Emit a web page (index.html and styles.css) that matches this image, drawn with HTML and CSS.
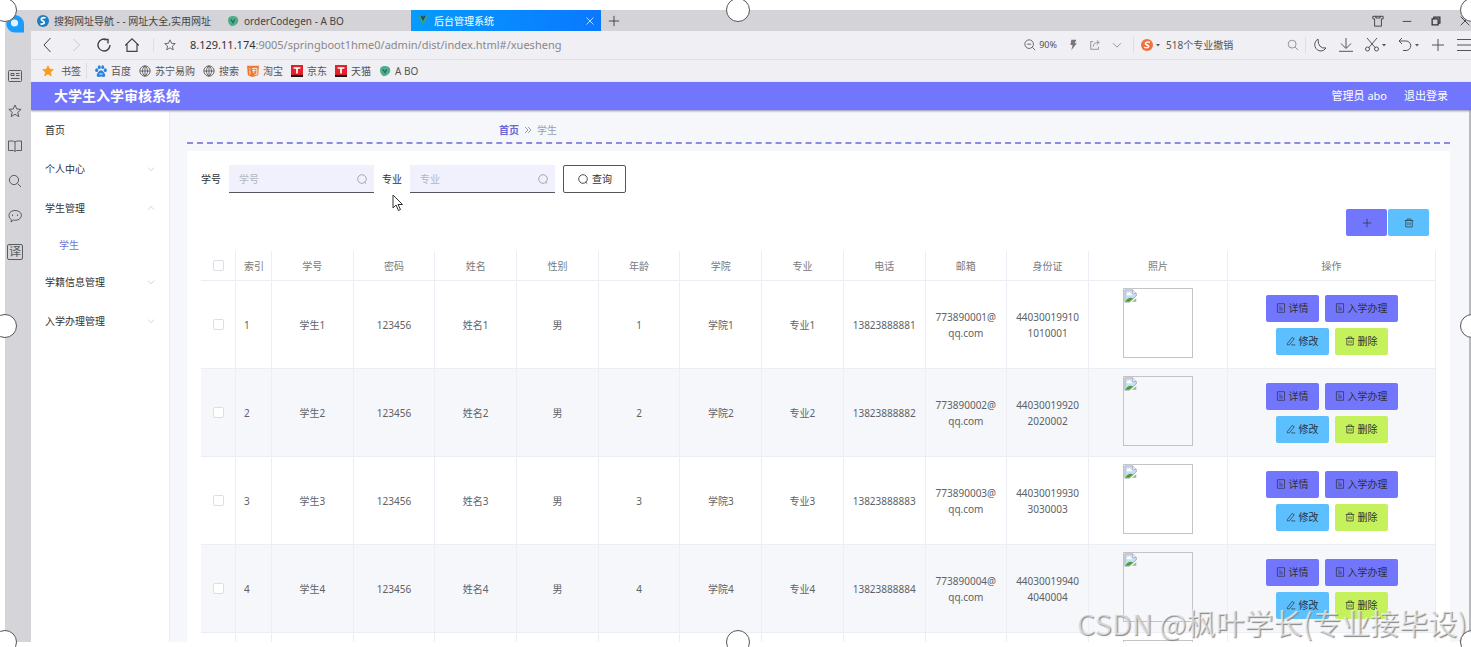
FILE: index.html
```html
<!doctype html>
<html lang="zh-CN">
<head>
<meta charset="UTF-8">
<title>后台管理系统</title>
<link rel="stylesheet" href="styles.css">
</head>
<body>
<svg class="sprite" aria-hidden="true">
	<symbol id="search" viewBox="0 0 14 14"><circle cx="6" cy="6" r="4.6"/><path d="M9.5 9.5L13 13"/></symbol>
	<symbol id="zoom-out" viewBox="0 0 14 14"><circle cx="6" cy="6" r="5"/><path d="M9.7 9.7L13 13M3.7 6h4.6"/></symbol>
	<symbol id="lens" viewBox="0 0 14 14"><circle cx="7" cy="7" r="5"/><path d="M10 10.500l2 2"/></symbol>
	<symbol id="star" viewBox="0 0 14 14"><path d="M7 1l1.8 4 4.3.4-3.3 2.9 1 4.3L7 10.3l-3.8 2.3 1-4.3L.9 5.4 5.2 5z"/></symbol>
	<symbol id="down" viewBox="0 0 14 14"><path d="M2.5 5L7 9.5 11.5 5"/></symbol>
	<symbol id="up" viewBox="0 0 14 14"><path d="M2.5 9.5L7 5l4.5 4.5"/></symbol>
	<symbol id="plus" viewBox="0 0 14 14"><path d="M7 1v12M1 7h12"/></symbol>
	<symbol id="tick" viewBox="0 0 4 14"><path d="M0 6h4L2 8.5z" fill="#555" stroke="none"/></symbol>
	<symbol id="globe" viewBox="0 0 14 14"><circle cx="7" cy="7" r="6"/><path d="M1 7h12M7 1v12M7 1C3 4 3 10 7 13M7 1c4 3 4 9 0 12"/></symbol>
	<symbol id="leaf" viewBox="0 0 14 14"><path d="M2 3c4-3 10-2 11 2 1 5-4 8-8 8-3-2-5-6-3-10z" fill="#4cae8a" stroke="none"/><path d="M4.5 5L7 9l2-4" stroke="#2c6f60" stroke-width="1.6"/></symbol>
	<symbol id="red-t" viewBox="0 0 14 14"><path d="M0 0h14v14H0z" fill="#e3202c" stroke="none"/><path d="M0 11.5h14V14H0z" fill="#251014" stroke="none"/><path d="M3 3.5h8M7 3.5V10" stroke="#fff" stroke-width="2"/></symbol>
	<symbol id="doc" viewBox="0 0 14 14"><path d="M2 1h10v12H2zM4.5 4.5h2M4.5 7h5M4.5 9.5h5"/></symbol>
	<symbol id="edit" viewBox="0 0 14 14"><path d="M2 10.5L8.5 2l3 2L5 12l-3 .5zM7 12.5h6"/></symbol>
	<symbol id="trash" viewBox="0 0 14 14"><path d="M1 3.5h12M4.5 3.5V1.5h5v2M2.5 3.5v9h9v-9M5.5 6v4M8.5 6v4"/></symbol>
	<symbol id="broken" viewBox="0 0 16 16"><path d="M1 1h9l4 4v3L6 15H1z" fill="#cbdcf5" stroke="#a5a9b0"/><path d="M10 1v4h4" fill="#fff" stroke="#a5a9b0"/><path d="M3 6q0-2 2-2 2-1 3 1 1 0 1 2H3z" fill="#fff" stroke="none"/><path d="M1.5 14.5q3-6 9-4L6 14.5z" fill="#4b9f35" stroke="none"/><path d="M9 14.5l5-4v4z" fill="#9fb595" stroke="none"/></symbol>
</svg>

<div class="frame">
	<!-- browser side rail -->
	<div class="rail">
		<svg class="rail-logo" viewBox="0 0 18 18"><path d="M9 0a9 9 0 0 1 9 9v8.500H9A8.700 8.700 0 0 1 9 0z" fill="#1a9dfb" stroke="none"/><circle cx="8.500" cy="8" r="3.600" fill="#e4f3ff" stroke="none"/></svg>
		<svg class="icon" viewBox="0 0 14 14"><rect x=".5" y="1.500" width="13" height="11" rx="1"/><path d="M3 4.500h3v2H3zM8 4.500h3.500M8 6.500h3.500M3 9.500h8.500"/></svg>
		<svg class="icon"><use href="#star"/></svg>
		<svg class="icon" viewBox="0 0 14 14"><path d="M7 3Q6 2 4.500 2H.500v9.500h5L7 12.500l1.500-1h5V2h-4Q8 2 7 3zM7 3v9"/></svg>
		<svg class="icon"><use href="#search"/></svg>
		<svg class="icon" viewBox="0 0 14 14"><path d="M3 13l.5-2.200C-1 8 .5 1.500 7 1.500s8.500 6 4 8.800C9 11.600 6.500 11.400 5.500 11z"/><path d="M4.500 5.500v1.500M9.500 5.500v1.500"/></svg>
		<span class="translate">译</span>
	</div>

	<div class="browser">
		<div class="tabs">
			<div class="tab"><svg class="icon-s" viewBox="0 0 14 14"><circle cx="7" cy="7" r="7" fill="#1c7cc4" stroke="none"/><path d="M10 3.500C6 2 3 5 6.500 6.800S9 11 4 10.500" stroke="#fff" stroke-width="2"/></svg><span class="tab-text">搜狗网址导航 - - 网址大全,实用网址</span></div>
			<div class="tab"><svg class="icon-s"><use href="#leaf"/></svg><span class="tab-text">orderCodegen - A BO</span></div>
			<div class="tab active"><svg class="icon-s" viewBox="0 0 14 14"><path d="M1 1h3l3 5 3-5h3L7 12z" fill="#36a37c" stroke="none"/><path d="M4 1h2l1 2 1-2h2L7 7z" fill="#24435d" stroke="none"/></svg><span class="tab-text">后台管理系统</span><svg class="icon-xs" viewBox="0 0 14 14"><path d="M2 2l10 10M12 2L2 12"/></svg></div>
			<svg class="icon-s new-tab"><use href="#plus"/></svg>
			<div class="window-tools">
				<svg class="icon-s" viewBox="0 0 14 14"><path d="M1 1.500h12v3h-2V13H3V4.500H1zM4.500 1.500v2h5v-2"/></svg>
				<svg class="icon-s" viewBox="0 0 14 14"><path d="M2 7.500h10"/></svg>
				<svg class="icon-s" viewBox="0 0 14 14"><path d="M2.500 4.500h7v7h-7zM4.500 4.500v-2h7v7h-2" stroke-width="1.500"/></svg>
				<svg class="icon-s" viewBox="0 0 14 14"><path d="M2 2l10 10M12 2L2 12"/></svg>
			</div>
		</div>

		<div class="toolbar">
			<div class="nav-tools">
				<svg class="icon" viewBox="0 0 14 14"><path d="M9.500 0L3 7l6.500 7"/></svg>
				<svg class="icon pale" viewBox="0 0 14 14"><path d="M4.500 1L10.500 7l-6 6"/></svg>
				<svg class="icon" viewBox="0 0 14 14"><path d="M10 1.800A6 6 0 1 0 13 7M7 1.500h4v4" stroke-width="1.400"/></svg>
				<svg class="icon" viewBox="0 0 14 14"><path d="M0 7.500L7 .8l7 6.700M2 6v7.300h10V6" stroke-width="1.200"/></svg>
			</div>
			<div class="address"><svg class="icon-s"><use href="#star"/></svg><span class="url"><b>8.129.11.174</b>:9005/springboot1hme0/admin/dist/index.html#/xuesheng</span></div>
			<div class="page-tools">
				<span class="zoom"><svg class="icon-s"><use href="#zoom-out"/></svg>90%</span>
				<svg class="icon-s" viewBox="0 0 14 14"><path d="M5 1h6L9 5h2.500L5 13l1.500-6H4z" fill="#777" stroke="none"/></svg>
				<svg class="icon-s light" viewBox="0 0 14 14"><path d="M5 3H2v9h9V9M5 9q0-5 6-5M9 1.500L12 4 9 6.500"/></svg>
				<svg class="icon-s light"><use href="#down"/></svg>
			</div>
			<div class="quick-search">
				<svg class="icon-s" viewBox="0 0 14 14"><circle cx="7" cy="7" r="7" fill="#f2703c" stroke="none"/><path d="M10.500 4C6 2.500 3 5.500 7 7s2 4-3.500 2.800" stroke="#fff" stroke-width="1.700"/></svg>
				<svg class="tick"><use href="#tick"/></svg>
				<span class="quick-text">518个专业撤销</span>
				<svg class="icon-s light"><use href="#search"/></svg>
			</div>
			<div class="more-tools">
				<svg class="icon" viewBox="0 0 14 14"><path d="M5 1C-1 5 2 13 8 13q3 0 5-3Q5 11 5 1z"/></svg>
				<svg class="icon" viewBox="0 0 14 14"><path d="M7 0v10M2 5.500l5 5 5-5M0 13.300h14"/></svg>
				<span class="tool"><svg class="icon" viewBox="0 0 14 14"><path d="M2 0l8.500 10M12 0L3.500 10"/><circle cx="2.500" cy="11" r="2"/><circle cx="11.500" cy="11" r="2"/></svg><svg class="tick"><use href="#tick"/></svg></span>
				<span class="tool"><svg class="icon" viewBox="0 0 14 14"><path d="M4 0L1 3l3 3M1 3h7a4.700 4.700 0 0 1 0 9.500H5"/></svg><svg class="tick"><use href="#tick"/></svg></span>
				<svg class="icon"><use href="#plus"/></svg>
				<svg class="icon" viewBox="0 0 14 14"><path d="M0 1.500h14M0 7h14M0 12.500h14"/></svg>
			</div>
		</div>

		<div class="bookmarks">
			<a href="#" class="first"><svg class="icon-s orange"><use href="#star"/></svg>书签</a>
			<a href="#"><svg class="icon-s" viewBox="0 0 14 14"><g fill="#2c83dc" stroke="none"><ellipse cx="2" cy="6" rx="1.800" ry="2.300"/><ellipse cx="5" cy="2.500" rx="1.700" ry="2.300"/><ellipse cx="9" cy="2.500" rx="1.700" ry="2.300"/><ellipse cx="12" cy="6" rx="1.800" ry="2.300"/><path d="M7 6c2 0 5 4 5 6 0 3-3 1.500-5 1.500S2 15 2 12c0-2 3-6 5-6z"/></g><path d="M5 10.500h4" stroke="#fff"/></svg>百度</a>
			<a href="#"><svg class="icon-s"><use href="#globe"/></svg>苏宁易购</a>
			<a href="#"><svg class="icon-s"><use href="#globe"/></svg>搜索</a>
			<a href="#"><svg class="icon-s" viewBox="0 0 14 14"><path d="M0 1h14l-1 11-7 2-5-2z" fill="#f07a32" stroke="none"/><path d="M2.500 4l1.500 1M2.500 7L4 8l-1 3M6 4h5.500v7H9M6 6.500h4M8 5v4.500" stroke="#fff"/></svg>淘宝</a>
			<a href="#"><svg class="icon-s"><use href="#red-t"/></svg>京东</a>
			<a href="#"><svg class="icon-s"><use href="#red-t"/></svg>天猫</a>
			<a href="#"><svg class="icon-s"><use href="#leaf"/></svg>A BO</a>
		</div>

		<!-- admin app -->
		<header class="app-header">
			<h1>大学生入学审核系统</h1>
			<span class="user">管理员 abo</span>
			<a href="#" class="logout">退出登录</a>
		</header>

		<div class="app-body">
			<nav class="menu">
				<a href="#">首页</a>
				<a href="#">个人中心<svg class="icon-xs"><use href="#down"/></svg></a>
				<a href="#">学生管理<svg class="icon-xs"><use href="#up"/></svg></a>
				<a href="#" class="sub">学生</a>
				<a href="#">学籍信息管理<svg class="icon-xs"><use href="#down"/></svg></a>
				<a href="#">入学办理管理<svg class="icon-xs"><use href="#down"/></svg></a>
			</nav>

			<main class="main">
				<div class="breadcrumb"><a href="#">首页</a><svg class="sep" viewBox="0 0 6 8"><path d="M0 1l3 3-3 3M3 1l3 3-3 3"/></svg><span>学生</span></div>

				<div class="panel">
					<form class="search">
						<label for="xuehao">学号</label>
						<div class="field"><input type="text" id="xuehao" placeholder="学号"><svg class="icon-s"><use href="#lens"/></svg></div>
						<label for="zhuanye">专业</label>
						<div class="field"><input type="text" id="zhuanye" placeholder="专业"><svg class="icon-s"><use href="#lens"/></svg></div>
						<button type="button" class="query"><svg class="icon-s"><use href="#lens"/></svg>查询</button>
					</form>
					<div class="actions">
						<button type="button" class="btn purple" aria-label="新增"><svg class="icon-xs"><use href="#plus"/></svg></button>
						<button type="button" class="btn blue" aria-label="删除"><svg class="icon-xs"><use href="#trash"/></svg></button>
					</div>

					<table class="students">
						<thead>
							<tr>
								<th class="col-check"><input type="checkbox" aria-label="全选"></th>
								<th class="col-index">索引</th>
								<th>学号</th>
								<th>密码</th>
								<th>姓名</th>
								<th>性别</th>
								<th>年龄</th>
								<th>学院</th>
								<th>专业</th>
								<th>电话</th>
								<th>邮箱</th>
								<th>身份证</th>
								<th class="col-photo">照片</th>
								<th class="col-ops">操作</th>
							</tr>
						</thead>
						<tbody>
							<tr>
								<td><input type="checkbox" aria-label="选择 1"></td>
								<td class="index">1</td><td>学生1</td><td>123456</td><td>姓名1</td><td>男</td><td>1</td><td>学院1</td><td>专业1</td><td>13823888881</td><td>773890001@qq.com</td><td>440300199101010001</td>
								<td class="photo-cell"><div class="photo"><svg><use href="#broken"/></svg></div></td>
								<td>
									<div class="ops">
										<button type="button" class="btn purple"><svg class="icon-xs"><use href="#doc"/></svg>详情</button>
										<button type="button" class="btn purple"><svg class="icon-xs"><use href="#doc"/></svg>入学办理</button>
										<button type="button" class="btn blue"><svg class="icon-xs"><use href="#edit"/></svg>修改</button>
										<button type="button" class="btn green"><svg class="icon-xs"><use href="#trash"/></svg>删除</button>
									</div>
								</td>
							</tr>
							<tr>
								<td><input type="checkbox" aria-label="选择 2"></td>
								<td class="index">2</td><td>学生2</td><td>123456</td><td>姓名2</td><td>男</td><td>2</td><td>学院2</td><td>专业2</td><td>13823888882</td><td>773890002@qq.com</td><td>440300199202020002</td>
								<td class="photo-cell"><div class="photo"><svg><use href="#broken"/></svg></div></td>
								<td>
									<div class="ops">
										<button type="button" class="btn purple"><svg class="icon-xs"><use href="#doc"/></svg>详情</button>
										<button type="button" class="btn purple"><svg class="icon-xs"><use href="#doc"/></svg>入学办理</button>
										<button type="button" class="btn blue"><svg class="icon-xs"><use href="#edit"/></svg>修改</button>
										<button type="button" class="btn green"><svg class="icon-xs"><use href="#trash"/></svg>删除</button>
									</div>
								</td>
							</tr>
							<tr>
								<td><input type="checkbox" aria-label="选择 3"></td>
								<td class="index">3</td><td>学生3</td><td>123456</td><td>姓名3</td><td>男</td><td>3</td><td>学院3</td><td>专业3</td><td>13823888883</td><td>773890003@qq.com</td><td>440300199303030003</td>
								<td class="photo-cell"><div class="photo"><svg><use href="#broken"/></svg></div></td>
								<td>
									<div class="ops">
										<button type="button" class="btn purple"><svg class="icon-xs"><use href="#doc"/></svg>详情</button>
										<button type="button" class="btn purple"><svg class="icon-xs"><use href="#doc"/></svg>入学办理</button>
										<button type="button" class="btn blue"><svg class="icon-xs"><use href="#edit"/></svg>修改</button>
										<button type="button" class="btn green"><svg class="icon-xs"><use href="#trash"/></svg>删除</button>
									</div>
								</td>
							</tr>
							<tr>
								<td><input type="checkbox" aria-label="选择 4"></td>
								<td class="index">4</td><td>学生4</td><td>123456</td><td>姓名4</td><td>男</td><td>4</td><td>学院4</td><td>专业4</td><td>13823888884</td><td>773890004@qq.com</td><td>440300199404040004</td>
								<td class="photo-cell"><div class="photo"><svg><use href="#broken"/></svg></div></td>
								<td>
									<div class="ops">
										<button type="button" class="btn purple"><svg class="icon-xs"><use href="#doc"/></svg>详情</button>
										<button type="button" class="btn purple"><svg class="icon-xs"><use href="#doc"/></svg>入学办理</button>
										<button type="button" class="btn blue"><svg class="icon-xs"><use href="#edit"/></svg>修改</button>
										<button type="button" class="btn green"><svg class="icon-xs"><use href="#trash"/></svg>删除</button>
									</div>
								</td>
							</tr>
							<tr>
								<td></td><td></td><td></td><td></td><td></td><td></td><td></td><td></td><td></td><td></td><td></td><td></td>
								<td class="photo-cell"><div class="photo"></div></td>
								<td></td>
							</tr>
						</tbody>
					</table>
				</div>
			</main>
		</div>
	</div>
</div>

<svg class="cursor" viewBox="0 0 12 18"><path d="M1 1v13l3-3 2.500 5.500 2-1L6 10.500h4.500z" fill="#fff" stroke="#333"/></svg>
<div class="watermark">CSDN @枫叶学长(专业接毕设)</div>

<!-- selection handles -->
<i class="handle top left"></i><i class="handle top center"></i><i class="handle top right"></i>
<i class="handle middle left"></i><i class="handle middle right"></i>
<i class="handle bottom left"></i><i class="handle bottom center"></i><i class="handle bottom right"></i>
</body>
</html>
```
FILE: styles.css
```css
*{box-sizing:border-box;}
body{margin:0;height:100vh;padding:10px 0 5px 5px;background:#fff;position:relative;overflow:hidden;font:10px/16px "Noto Sans","Noto Sans CJK SC",sans-serif;color:#606266;}
a{color:inherit;text-decoration:none;}
button,input{font:inherit;margin:0;}
svg{fill:none;stroke:currentColor;flex:none;display:block;}
.sprite{position:absolute;width:0;height:0;}
.icon{width:14px;height:14px;}
.icon-s{width:12px;height:12px;}
.icon-xs{width:10px;height:10px;}
.tick{width:4px;height:14px;}

.frame{display:flex;height:100%;}
.rail{width:26px;flex:none;background:#d5d4d9;color:#5b5b60;display:flex;flex-direction:column;align-items:center;gap:21px;padding:5px 6px 0 0;}
.rail-logo{width:18px;height:18px;margin-bottom:15px;}
.translate{width:16px;height:16px;border:1px solid #5b5b60;border-radius:2px;font-size:12px;line-height:14px;text-align:center;}
.browser{flex:1;min-width:0;display:flex;flex-direction:column;background:#f0eff4;overflow:hidden;}

.tabs{height:21px;flex:none;display:flex;align-items:center;background:#d4d3d8;color:#444;}
.tab{width:190px;height:20px;display:flex;align-items:center;gap:5px;padding:0 6px;}
.tab-text{flex:1;overflow:hidden;white-space:nowrap;}
.tab.active{height:21px;background:linear-gradient(90deg,#079bff,#0a78ff);color:#fff;}
.new-tab{margin-left:7px;color:#333;}
.window-tools{margin-left:auto;display:flex;gap:17px;color:#333;}

.toolbar{height:29px;flex:none;display:flex;align-items:center;border-bottom:1px solid #e2e2e6;color:#555;}
.nav-tools{display:flex;gap:14px;padding:0 14px 0 10px;border-right:1px solid #dddde2;color:#444;}
.pale{color:#c8c8cc;}
.light{color:#888;}
.address{flex:1;display:flex;align-items:center;gap:14px;padding-left:10px;}
.url{font-size:11px;color:#888;}
.url b{font-weight:normal;color:#333;}
.page-tools{display:flex;align-items:center;gap:10px;padding-right:10px;}
.zoom{display:flex;align-items:center;gap:3px;font-size:9px;}
.quick-search{width:173px;display:flex;align-items:center;gap:3px;padding:0 6px 0 7px;border-left:1px solid #dddde2;border-right:1px solid #dddde2;}
.quick-text{flex:1;padding-left:3px;}
.more-tools{display:flex;align-items:center;gap:12px;padding-left:7px;}
.tool{display:flex;gap:3px;}

.bookmarks{height:22px;flex:none;display:flex;align-items:center;gap:8px;padding-left:11px;color:#555;}
.bookmarks a{display:flex;align-items:center;gap:4px;}
.bookmarks .first{padding-right:5px;border-right:1px solid #dddde2;gap:7px;}
.orange{fill:#fb9a1a;color:#fb9a1a;}

.app-header{height:28px;flex:none;display:flex;align-items:center;gap:17px;padding:0 23px;background:#7276fd;color:#fff;font-size:11px;box-shadow:0 1px 2px #8c8cb0;position:relative;}
.app-header h1{margin:0 auto 0 0;font-size:14px;line-height:20px;}
.app-body{flex:1;min-height:0;display:flex;background:#f5f7fa;border-right:2px solid #b9bac0;}
.menu{width:139px;flex:none;background:#fff;border-right:1px solid #ebecf0;color:#303133;}
.menu a{height:39px;display:flex;align-items:center;justify-content:space-between;padding:0 13px 0 14px;}
.menu .icon-xs{color:#c0c4cc;}
.menu .sub{height:35px;padding-left:28px;color:#7276d8;}

.main{flex:1;min-width:0;padding:0 19px 0 17px;overflow:hidden;}
.breadcrumb{height:34px;display:flex;align-items:center;gap:6px;padding:8px 0 0 312px;border-bottom:2px dashed #8b8be0;color:#97a0b3;}
.breadcrumb a{color:#6a68d8;font-weight:bold;}
.sep{width:6px;height:8px;}
.panel{margin-top:7px;padding:14px;background:#fff;}
.search{display:flex;align-items:center;gap:8px;color:#303133;}
.field{width:145px;height:28px;display:flex;align-items:center;padding:0 6px 0 10px;background:#f1f1fe;border-bottom:1px solid #55555f;color:#999;}
.field input{flex:1;min-width:0;border:0;padding:0;background:none;outline:0;}
.field input::placeholder{color:#b4b6c0;}
.query{height:28px;width:63px;display:flex;align-items:center;justify-content:center;gap:3px;padding:0;background:#fff;border:1px solid #555;border-radius:2px;color:#303133;}
.actions{display:flex;justify-content:flex-end;gap:1px;margin:16px 7px 15px 0;}
.btn{height:27px;display:flex;align-items:center;justify-content:center;gap:3px;padding:0 10px;border:0;border-radius:2px;color:#303133;}
.actions .btn{width:41px;}
.purple{background:#7276fd;}
.blue{background:#5bc0fd;}
.green{background:#c5f15c;}

.students{width:100%;table-layout:fixed;border-collapse:separate;border-spacing:0;text-align:center;}
.students th,.students td{padding:0 8px;border-right:1px solid #ebeef5;border-bottom:1px solid #ebeef5;word-break:break-all;}
.students th{height:30px;color:#777a80;font-weight:normal;}
.students td{height:88px;}
.students th:first-child,.students td:first-child{padding:0;}
.students .col-index,.students .index{padding:0 0 0 8px;text-align:left;}
.students tbody tr:nth-child(even){background:#f5f7fa;}
.col-check{width:35px;}
.col-index{width:36px;}
.col-photo{width:139px;}
.col-ops{width:208px;}
.students input{appearance:none;display:block;width:11px;height:11px;margin:0 auto;background:#fff;border:1px solid #dcdfe6;border-radius:2px;}
.students .photo-cell{padding-bottom:3px;}
.photo{width:70px;height:70px;margin:0 auto;border:1px solid #c4c4c8;}
.photo svg{width:14px;height:14px;}
.ops{max-width:150px;margin:0 auto;display:flex;flex-wrap:wrap;justify-content:center;gap:6px;}

.cursor{position:absolute;left:392px;top:194px;width:12px;height:18px;}
.watermark{position:absolute;right:4px;bottom:5px;font:29px/40px "Noto Sans CJK SC",sans-serif;color:rgba(255,255,255,.6);text-shadow:1px 1px 1px #888;white-space:nowrap;}
.handle{position:absolute;width:24px;height:24px;background:#fff;border:1px solid #555;border-radius:50%;}
.top{top:-2px;}
.middle{top:calc(50% - 10px);}
.bottom{bottom:-7px;}
.left{left:-7px;}
.center{left:calc(50% - 10px);}
.right{right:-13px;}
```
